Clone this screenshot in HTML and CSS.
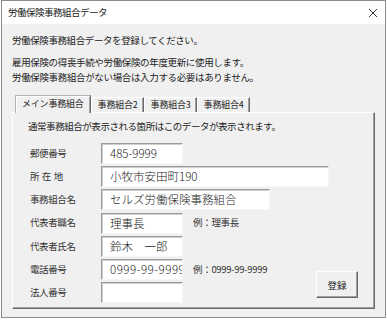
FILE: index.html
```html
<!DOCTYPE html>
<html lang="ja">
<head>
<meta charset="utf-8">
<link rel="stylesheet" href="styles.css">
</head>
<body>
<div class="window">
  <div class="titlebar">
    <span class="title">労働保険事務組合データ</span>
    <svg class="close" width="10" height="10" viewBox="0 0 10 10"><path d="M1 1 L9 9 M9 1 L1 9" stroke="#333" stroke-width="1" fill="none"/></svg>
  </div>
  <div class="body">
    <p class="intro">労働保険事務組合データを登録してください。</p>
    <p class="note-lines">雇用保険の得喪手続や労働保険の年度更新に使用します。<br>労働保険事務組合がない場合は入力する必要はありません。</p>
    <div class="tabs">
      <div class="tab selected">メイン事務組合</div>
      <div class="tab">事務組合2</div>
      <div class="tab">事務組合3</div>
      <div class="tab">事務組合4</div>
    </div>
    <div class="panel">
      <p class="desc">通常事務組合が表示される箇所はこのデータが表示されます。</p>
      <div class="form">
        <label class="lbl r1">郵便番号</label>
        <div class="field r1 short">485-9999</div>

        <label class="lbl r2">所 在 地</label>
        <div class="field r2 addr">小牧市安田町190</div>

        <label class="lbl r3">事務組合名</label>
        <div class="field r3 name">セルズ労働保険事務組合</div>

        <label class="lbl r4">代表者職名</label>
        <div class="field r4 short">理事長</div>
        <span class="hint r4">例：理事長</span>

        <label class="lbl r5">代表者氏名</label>
        <div class="field r5 short">鈴木　一郎</div>

        <label class="lbl r6">電話番号</label>
        <div class="field r6 short clip">0999-99-9999</div>
        <span class="hint r6">例：0999-99-9999</span>

        <label class="lbl r7">法人番号</label>
        <div class="field r7 short"></div>

        <button class="btn">登録</button>
      </div>
    </div>
  </div>
</div>
</body>
</html>
```
FILE: styles.css
```css
* { box-sizing: border-box; }
html, body { margin: 0; padding: 0; background: #fff; }
body {
  font-family: "Noto Sans CJK JP", "Noto Sans", sans-serif;
  color: #222;
}
.window {
  width: 385px;
  height: 318px;
  margin-left: 1px;
  border: 1px solid #8e8e8e;
  background: #f0f0f0;
  display: flex;
  flex-direction: column;
}
.titlebar {
  height: 23px;
  background: #fff;
  display: flex;
  align-items: center;
  justify-content: space-between;
  padding: 0 7px 0 6px;
}
.title {
  font-size: 9.5px;
  letter-spacing: -0.5px;
  color: #222;
  line-height: 1;
}
.close { display: block; }
.body {
  padding: 9px 10px 0 10px;
  flex: 1;
}
p { margin: 0; }
.intro {
  font-size: 9.5px;
  letter-spacing: -0.4px;
  line-height: 15px;
}
.note-lines {
  margin-top: 7px;
  font-size: 9.5px;
  letter-spacing: -0.35px;
  line-height: 15px;
}
.tabs {
  display: flex;
  align-items: flex-end;
  margin-top: 9px;
  padding-left: 3px;
  height: 18px;
  position: relative;
  z-index: 1;
}
.tab {
  height: 15px;
  padding: 0 5px 0 6px;
  font-size: 9px;
  letter-spacing: -0.2px;
  line-height: 14px;
  border-top: 1px solid #fff;
  border-left: 1px solid #fff;
  border-right: 1px solid #696969;
  box-shadow: inset -1px 0 0 #a0a0a0;
  background: #f0f0f0;
  white-space: nowrap;
}
.tab.selected {
  height: 18px;
  padding: 0 6px;
  line-height: 16px;
  margin-bottom: -1px;
  border: 1px solid #b4b4b4;
  border-bottom: none;
  border-right-color: #696969;
  box-shadow: inset 1px 1px 0 #fff, inset -1px 0 0 #a0a0a0;
}
.panel {
  height: 197px;
  border: 1px solid;
  border-color: #fff #696969 #696969 #fff;
  box-shadow: inset -1px -1px 0 #a0a0a0;
  padding: 6px 0 0 15px;
}
.desc {
  font-size: 9.5px;
  letter-spacing: -0.45px;
  line-height: 15px;
}
.form {
  margin-top: 9px;
  margin-left: 2px;
  display: grid;
  grid-template-columns: 71px 82px 10px 77px 46px 13px 28px;
  grid-template-rows: repeat(7, 21px);
  row-gap: 2.2px;
}
.lbl {
  grid-column: 1;
  font-size: 9.5px;
  letter-spacing: -0.4px;
  word-spacing: 1px;
  color: #333;
  align-self: center;
  line-height: 1;
}
.field {
  background: #fff;
  border: 1px solid;
  border-color: #9a9a9a #f6f6f6 #f6f6f6 #9a9a9a;
  box-shadow: inset 1px 1px 0 #cfcfcf;
  font-size: 11.5px;
  font-weight: 300;
  line-height: 19px;
  padding-left: 8px;
  white-space: nowrap;
  overflow: hidden;
  color: #222;
}
.clip { letter-spacing: 0.5px; }
.short { grid-column: 2; }
.addr { grid-column: 2 / 7; }
.name { grid-column: 2 / 5; }
.hint {
  grid-column: 4 / 6;
  font-size: 9.5px;
  letter-spacing: -0.3px;
  color: #333;
  align-self: center;
  line-height: 1;
}
.r1 { grid-row: 1; }
.r2 { grid-row: 2; }
.r3 { grid-row: 3; }
.r4 { grid-row: 4; }
.r5 { grid-row: 5; }
.r6 { grid-row: 6; }
.r7 { grid-row: 7; }
.btn {
  grid-column: 6 / 8;
  grid-row: 6 / 8;
  align-self: end;
  margin-bottom: 5px;
  height: 27px;
  width: 42px;
  margin-left: 0;
  padding: 0;
  background: #f0f0f0;
  border: 1px solid;
  border-color: #fff #696969 #696969 #fff;
  box-shadow: inset -1px -1px 0 #a0a0a0;
  font-family: "Noto Sans CJK JP", sans-serif;
  font-size: 9.5px;
  color: #222;
}
```
